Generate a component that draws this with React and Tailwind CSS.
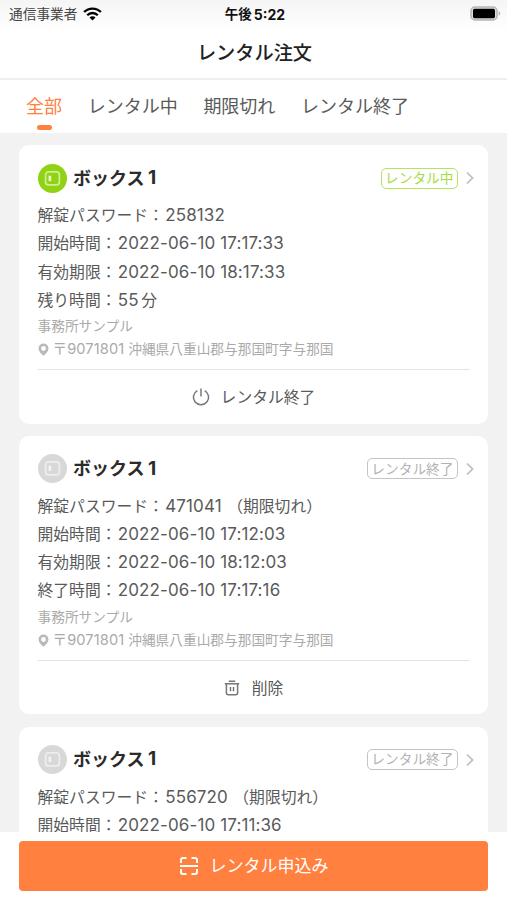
const TABS = ["全部", "レンタル中", "期限切れ", "レンタル終了"];

const OFFICE = {
	name: "事務所サンプル",
	zip: "〒9071801",
	address: "沖縄県八重山郡与那国町字与那国",
};

const ORDERS = [
	{
		id: 1,
		name: "ボックス",
		no: "1",
		active: true,
		status: "レンタル中",
		password: "258132",
		rows: [
			["開始時間", "2022-06-10 17:17:33"],
			["有効期限", "2022-06-10 18:17:33"],
			["残り時間", "55", "分"],
		],
		office: OFFICE,
	},
	{
		id: 2,
		name: "ボックス",
		no: "1",
		active: false,
		status: "レンタル終了",
		password: "471041",
		rows: [
			["開始時間", "2022-06-10 17:12:03"],
			["有効期限", "2022-06-10 18:12:03"],
			["終了時間", "2022-06-10 17:17:16"],
		],
		office: OFFICE,
	},
	{
		id: 3,
		name: "ボックス",
		no: "1",
		active: false,
		status: "レンタル終了",
		password: "556720",
		rows: [["開始時間", "2022-06-10 17:11:36"]],
	},
];

function WifiIcon() {
	return (
		<svg width="19" height="14" viewBox="0 0 19 14" fill="none" stroke="#000" strokeWidth="2.3">
			<path d="M1.1 5a11.9 11.9 0 0 1 16.8 0" />
			<path d="M4.2 8.2a7.5 7.5 0 0 1 10.6 0" />
			<path d="M9.5 13.4 6.5 10.4a4.2 4.2 0 0 1 6 0z" fill="#000" stroke="none" />
		</svg>
	);
}

function BatteryIcon() {
	return (
		<svg width="31" height="16" viewBox="0 0 31 16">
			<rect x="1" y="1" width="26" height="13" rx="4" fill="#ddd" stroke="#b5b5b5" strokeWidth="1.5" />
			<rect x="3" y="2.8" width="22" height="9.4" rx="1.6" fill="#000" />
			<path d="M28.6 5.3c1.2.4 1.6 1.2 1.6 2.2s-.4 1.8-1.6 2.2z" fill="#b5b5b5" />
		</svg>
	);
}

function BoxIcon({ active }) {
	return (
		<span
			className={`flex h-[29px] w-[29px] shrink-0 items-center justify-center rounded-full ${
				active ? "bg-[#8fd314]" : "bg-[#d8d8d8]"
			}`}
		>
			<svg
				width="17"
				height="17"
				viewBox="0 0 17 17"
				fill="none"
				stroke={active ? "#d0ee98" : "#ededed"}
				strokeWidth="1.7"
			>
				<rect x="1.6" y="1.9" width="13.8" height="13" rx="3" />
				<path d="M5.9 5.7v5.4" strokeWidth="2.6" stroke={active ? "#eefad6" : "#f5f5f5"} />
			</svg>
		</span>
	);
}

function ChevronIcon() {
	return (
		<svg width="8" height="14" viewBox="0 0 8 14" fill="none" stroke="#bdbdbd" strokeWidth="1.7">
			<path d="M1 1.5 6.6 7 1 12.5" />
		</svg>
	);
}

function PinIcon() {
	return (
		<svg width="11" height="13" viewBox="0 0 11 13">
			<path
				fill="#b9b9b9"
				fillRule="evenodd"
				d="M5.5.5a5 5 0 0 1 5 5c0 2.9-2.8 5.3-5 7.2C3.3 10.8.5 8.4.5 5.5a5 5 0 0 1 5-5zm0 2.6a2.400 2.400 0 1 0 0 4.800 2.400 2.400 0 0 0 0-4.800z"
			/>
		</svg>
	);
}

function PowerIcon() {
	return (
		<svg width="18" height="18" viewBox="0 0 18 18" fill="none" stroke="#777" strokeWidth="1.5">
			<path d="M5.3 2.6a7.6 7.6 0 1 0 7.4 0" />
			<path d="M9 .6v8" />
		</svg>
	);
}

function TrashIcon() {
	return (
		<svg width="16" height="16" viewBox="0 0 16 16" fill="none" stroke="#777" strokeWidth="1.5">
			<path d="M.8 3.8h14.4M4.8 1.2h6.4" />
			<path d="M2.4 3.8v9a2 2 0 0 0 2 2h7.2a2 2 0 0 0 2-2v-9" />
			<path d="M6.5 7v4.3M9.5 7v4.3" />
		</svg>
	);
}

function ScanIcon() {
	return (
		<svg width="20" height="20" viewBox="0 0 20 20" fill="none" stroke="#fff" strokeWidth="2">
			<path d="M2 7V4a2 2 0 0 1 2-2h3.5M12.5 2H16a2 2 0 0 1 2 2v3M18 13v3a2 2 0 0 1-2 2h-3.5M7.5 18H4a2 2 0 0 1-2-2v-3" />
			<path d="M1 10h18" />
		</svg>
	);
}

function OrderCard({ order }) {
	return (
		<div className="h-[278.5px] shrink-0 rounded-[10px] bg-white px-[18.5px] pt-[18.5px]">
			<div className="-mr-[4px] flex h-[29px] items-center">
				<BoxIcon active={order.active} />
				<h2 className="ml-[6.5px] flex items-center text-[18px] font-bold text-[#2b2b2b]">
					{order.name}
					<span className="ml-[3.5px] text-[19px]">{order.no}</span>
				</h2>
				<span
					className={`ml-auto mr-[8px] flex h-[21px] items-center rounded-[5px] border px-[3px] text-[13.7px] ${
						order.active
							? "border-[#b5e35f] text-[#a5dc42]"
							: "border-[#c4c4c4] text-[#b2b2b2]"
					}`}
				>
					{order.status}
				</span>
				<ChevronIcon />
			</div>

			<div className="mt-[9.9px] text-[15.8px] leading-[28px] text-[#5a5a5a]">
				<p className="h-[28.1px]">
					解錠パスワード：
					<span className="ml-[1.4px] text-[17px] leading-none tracking-[0.1px]">
						{order.password}
					</span>
					{!order.active && <span className="ml-[5.5px]">（期限切れ）</span>}
				</p>
				{order.rows.map(([label, value, unit]) => (
					<p key={label} className="h-[28.1px]">
						{label}：
						<span className="ml-[1.2px] text-[17px] leading-none tracking-[0.12px]">{value}</span>
						{unit && <span className="ml-[2.5px]">{unit}</span>}
					</p>
				))}
			</div>

			{order.office && (
				<>
					<div className="pt-[0.5px] text-[13.7px] leading-[23px] text-[#aaa]">
						<p>{order.office.name}</p>
						<p className="flex h-[23px] items-center">
							<PinIcon />
							<span className="ml-[4px] text-[14.6px] tracking-[0.1px]">{order.office.zip}</span>
							<span className="ml-[4px]">{order.office.address}</span>
						</p>
					</div>

					<button className="mt-[8px] flex h-[55px] w-full items-center justify-center border-t border-[#e3e3e3] text-[15.8px] text-[#5a5a5a]">
						{order.active ? (
							<>
								<PowerIcon />
								<span className="ml-[11px] pt-px">レンタル終了</span>
							</>
						) : (
							<>
								<TrashIcon />
								<span className="ml-[12px] pt-px">削除</span>
							</>
						)}
					</button>
				</>
			)}
		</div>
	);
}

export default function App() {
	return (
		<div
			lang="ja"
			className="flex h-[900px] w-[507px] flex-col overflow-hidden bg-[#f2f2f2] font-['Inter','Noto_Sans_CJK_JP',sans-serif]"
		>
			{/* Status bar + title */}
			<header className="h-[80px] shrink-0 border-b-2 border-[#efefef] bg-linear-to-b from-[#f5f5f5] to-white to-40%">
				<div className="grid h-[27px] grid-cols-3 items-center pl-[9px] pr-[6px]">
					<div className="flex items-center gap-[6px] pt-[1px] text-[13.7px] text-[#444]">
						通信事業者
						<WifiIcon />
					</div>
					<div className="flex items-center justify-center pt-px text-[13.5px] font-bold text-[#111]">
						午後<span className="ml-[2px] text-[14px]">5:22</span>
					</div>
					<div className="flex justify-end">
						<BatteryIcon />
					</div>
				</div>
				<h1 className="flex h-[50px] items-center justify-center pt-[3px] pl-[2px] text-[19.2px] font-medium text-[#222]">
					レンタル注文
				</h1>
			</header>

			{/* Tabs */}
			<nav className="flex h-[53px] shrink-0 gap-[25.7px] bg-white pl-[26px] text-[18px] text-[#5a5a5a]">
				{TABS.map((tab, i) => (
					<div key={tab} className="flex flex-col items-center">
						<span className={`h-[45px] leading-[53px] ${i === 0 ? "text-[#ff803f]" : ""}`}>
							{tab}
						</span>
						{i === 0 && <span className="h-[5px] w-[15px] rounded-full bg-[#ff803f]" />}
					</div>
				))}
			</nav>

			{/* Order list */}
			<main className="flex min-h-0 flex-1 flex-col gap-[12.3px] overflow-hidden px-[19px] pt-[12px]">
				{ORDERS.map((order) => (
					<OrderCard key={order.id} order={order} />
				))}
			</main>

			<footer className="h-[68px] shrink-0 bg-white px-[19px] pt-[9px]">
				<button className="flex h-[49.5px] w-full items-center justify-center rounded-[4px] bg-[#ff803f] text-[17px] text-white">
					<ScanIcon />
					<span className="ml-[11px] pt-[2px]">レンタル申込み</span>
				</button>
			</footer>
		</div>
	);
}
